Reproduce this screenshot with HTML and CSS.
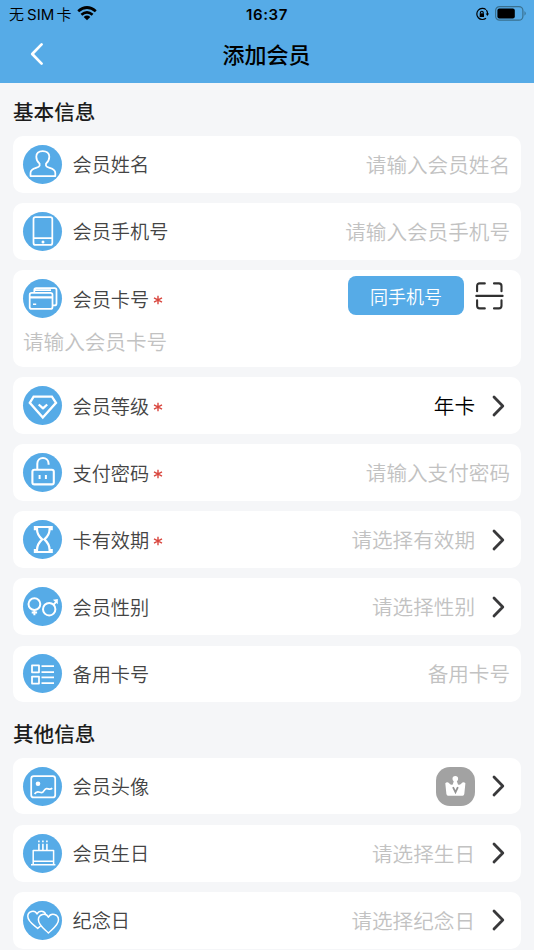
FILE: index.html
```html
<!DOCTYPE html>
<html lang="zh-CN">
<head>
<meta charset="utf-8">
<title>添加会员</title>
<link rel="stylesheet" href="styles.css">
</head>
<body>
<header class="header">
  <div class="status">
    <div class="carrier"><span>无<span class="sim">SIM</span>卡</span>
      <svg class="wifi" viewBox="0 0 20 15" fill="none" stroke="#000" stroke-width="2.7"><path d="M1.2 5.2Q10-2.2 18.8 5.2M4.4 8.7Q10 4.2 15.6 8.7"/><path d="M10 14.2L6.7 11Q10 8.2 13.3 11Z" fill="#000" stroke="none"/></svg>
    </div>
    <div class="clock">16:37</div>
    <div class="power">
      <svg class="rotation" viewBox="0 0 14 14" fill="none" stroke="#000" stroke-width="1.2"><path d="M11 2.6A5.6 5.6 0 1 0 11 11.2M11.4 3.2Q12.5 4.7 12.6 7"/><path d="M10.7 6.4H14L12.4 9Z" fill="#000" stroke="none"/><path d="M4.7 6.3H9V10H4.7Z" fill="#000" stroke="none"/><path d="M5.5 6.5V5.6A1.35 1.35 0 0 1 8.2 5.6V6.5"/></svg>
      <svg class="battery" viewBox="0 0 32 15"><rect x=".6" y=".6" width="27.3" height="13.6" rx="4" fill="none" stroke="#39708f" stroke-width="1.2"/><rect x="2.4" y="2.4" width="17.4" height="10" rx="2" fill="#000"/><path d="M29.5 5Q32 7.4 29.5 9.8Z" fill="#39708f"/></svg>
    </div>
  </div>
  <div class="nav">
    <svg class="back" viewBox="0 0 14 24"><path d="M11.6 2.4L2.2 12L11.6 21.6"/></svg>
    <h1>添加会员</h1>
  </div>
</header>
<main>
  <h2>基本信息</h2>
  <section class="list">
    <div class="card">
      <svg class="icon" viewBox="0 0 39 39"><path d="M16.6 20.8V18.7C14.6 17 13.3 14.5 13.3 11.7C13.3 8 16 6 19.7 6S26.3 8 26.3 11.7C26.3 14.5 25 17 23 18.7V20.8C24 23.5 32.3 22.4 32.3 28V31H7.5V28C7.5 22.4 15.6 23.5 16.6 20.8Z"/></svg>
      <span class="label">会员姓名</span><span class="value">请输入会员姓名</span>
    </div>
    <div class="card">
      <svg class="icon" viewBox="0 0 39 39"><rect x="10.5" y="5" width="18.8" height="27.9" rx="2"/><path d="M10.5 26.2H29.3"/><circle class="solid" cx="20" cy="30" r="1.5"/></svg>
      <span class="label">会员手机号</span><span class="value">请输入会员手机号</span>
    </div>
    <div class="card tall">
      <div class="line">
        <svg class="icon" viewBox="0 0 39 39"><path d="M11.3 13V11Q11.3 9.1 13.2 9.1H31.5Q33.5 9.1 33.5 11.1V24.4Q33.5 26.4 31.5 26.4H29.7M11.3 11.2H28"/><rect x="6.7" y="13.9" width="22.8" height="16" rx="2"/><path d="M6.7 18.3H29.5" stroke-width="2.2"/><path d="M10 25.2H13.2" stroke-width="1.5"/></svg>
        <span class="label">会员卡号</span><svg class="star" viewBox="0 0 10 10"><path d="M5 .8V9.2M1 2.8L9 7.2M9 2.8L1 7.2"/></svg>
        <button class="same">同手机号</button>
        <svg class="scan" viewBox="0 0 30 28"><path d="M2.1 9.2V4Q2.1 1.4 4.7 1.4H9.8M19 1.4H23.9Q26.5 1.4 26.5 4V9.2M2.1 18.2V23.8Q2.1 26.4 4.7 26.4H9.8M19 26.4H23.9Q26.5 26.4 26.5 23.8V18.2M1.3 13.9H27.6"/></svg>
      </div>
      <div class="entry">请输入会员卡号</div>
    </div>
    <div class="card">
      <svg class="icon" viewBox="0 0 39 39"><path stroke-width="2.3" stroke-linejoin="miter" d="M10.6 10.7H28.9L33 16.8L19.8 31.5L6.8 16.8Z"/><path stroke-width="2.3" d="M15.7 18.5L20 22.4L24.2 18.5"/></svg>
      <span class="label">会员等级</span><svg class="star" viewBox="0 0 10 10"><path d="M5 .8V9.2M1 2.8L9 7.2M9 2.8L1 7.2"/></svg><span class="value chosen">年卡</span>
      <svg class="arrow" viewBox="0 0 13 22"><path d="M2 2L10.8 11L2 20"/></svg>
    </div>
    <div class="card">
      <svg class="icon" viewBox="0 0 39 39"><rect stroke-width="2.1" x="9.4" y="16.7" width="21.4" height="14.7" rx="2"/><path stroke-width="2" d="M14.3 16V10.8C14.3 3 25.6 3 25.6 10.8V11.7M16.6 22V26M22.9 22V26"/></svg>
      <span class="label">支付密码</span><svg class="star" viewBox="0 0 10 10"><path d="M5 .8V9.2M1 2.8L9 7.2M9 2.8L1 7.2"/></svg><span class="value">请输入支付密码</span>
    </div>
    <div class="card">
      <svg class="icon" viewBox="0 0 39 39"><path stroke-width="2.2" stroke-linejoin="miter" d="M11.9 7H28.7V9.2H26.6C26.6 13.3 25 16.2 21.4 19.4C25 22.6 26.6 26 26.6 30H28.7V32H11.9V30H14C14 26 15.6 22.6 19.2 19.4C15.6 16.2 14 13.3 14 9.2H11.9Z"/></svg>
      <span class="label">卡有效期</span><svg class="star" viewBox="0 0 10 10"><path d="M5 .8V9.2M1 2.8L9 7.2M9 2.8L1 7.2"/></svg><span class="value">请选择有效期</span>
      <svg class="arrow" viewBox="0 0 13 22"><path d="M2 2L10.8 11L2 20"/></svg>
    </div>
    <div class="card">
      <svg class="icon" viewBox="0 0 39 39"><circle stroke-width="2" cx="11.4" cy="17.1" r="5.9"/><path stroke-width="2" d="M11.4 23V28.2M8.7 25.6H14.1M30.6 17.7L33.4 14.6"/><circle stroke-width="2" cx="26.2" cy="22.2" r="6.2"/><path class="solid" d="M34.8 12V17.2L30 12.7Z"/></svg>
      <span class="label">会员性别</span><span class="value">请选择性别</span>
      <svg class="arrow" viewBox="0 0 13 22"><path d="M2 2L10.8 11L2 20"/></svg>
    </div>
    <div class="card">
      <svg class="icon" viewBox="0 0 39 39"><path d="M9 11.3H16V18.3H9ZM9 22.5H16V29.5H9ZM18.5 12H31M18.5 18H31M18.5 23.3H31M18.5 29.2H31"/></svg>
      <span class="label">备用卡号</span><span class="value">备用卡号</span>
    </div>
  </section>
  <h2 class="other">其他信息</h2>
  <section class="list">
    <div class="card">
      <svg class="icon" viewBox="0 0 39 39"><rect x="8.2" y="9.2" width="24" height="21.2" rx="2.5"/><circle class="solid" cx="15" cy="16.7" r="2.3"/><path d="M11.6 27C14 23 16.5 25.7 18.5 25.7C21 25.7 21 21.5 23.4 21.5C25.5 21.5 27 23.3 29.2 21.2"/></svg>
      <span class="label">会员头像</span>
      <svg class="avatar" viewBox="0 0 39 39"><rect width="39" height="39" rx="14" fill="#a2a2a2"/><circle cx="19.3" cy="11.8" r="2.8" fill="#fff"/><path fill="#fff" d="M18.2 13H20.4L22 17.4Q23.5 18.6 25.4 16.4Q27.4 14.4 29.4 16.2L28.3 27Q28 28.7 26.6 28.7H12Q10.7 28.7 10.4 27L9.3 16.2Q11.2 14.4 13.4 16.4Q15.2 18.6 16.7 17.4Z"/><path d="M17 20.2L19.5 25.2L21.9 20.2" fill="none" stroke="#929292" stroke-width="1.8"/></svg>
      <svg class="arrow" viewBox="0 0 13 22"><path d="M2 2L10.8 11L2 20"/></svg>
    </div>
    <div class="card">
      <svg class="icon" viewBox="0 0 39 39"><path d="M10.2 30V16.4H30.6V30M10.2 27.2H30.6M8 30.8H32.4" stroke-width="1.5"/><path stroke-width="1.6" stroke-linecap="butt" d="M15.9 9.8V16M19.9 9.8V16M23.9 9.8V16M15.9 6.5V8.3M19.9 6.5V8.3M23.9 6.5V8.3"/></svg>
      <span class="label">会员生日</span><span class="value">请选择生日</span>
      <svg class="arrow" viewBox="0 0 13 22"><path d="M2 2L10.8 11L2 20"/></svg>
    </div>
    <div class="card">
      <svg class="icon" viewBox="0 0 39 39"><path stroke-width="1.5" d="M17.6 25L14.7 27.4C11.6 24.4 4.8 21 4.8 15.3C4.8 10.2 11.7 8.4 14 13C16.1 9.2 21.3 9.6 22.7 13.4"/><path stroke-width="1.5" d="M25.4 32C22 28.4 15.4 24.5 15.4 18.8C15.4 13.2 23 11.1 25.4 16.2C28 11.1 35.5 13.2 35.5 18.8C35.5 24.5 28.8 28.4 25.4 32Z"/></svg>
      <span class="label">纪念日</span><span class="value">请选择纪念日</span>
      <svg class="arrow" viewBox="0 0 13 22"><path d="M2 2L10.8 11L2 20"/></svg>
    </div>
  </section>
</main>
</body>
</html>
```
FILE: styles.css
```css
* { box-sizing: border-box; }
body {
  margin: 0;
  height: 950px;
  overflow: hidden;
  background: #f5f6f8;
  font-family: "Noto Sans CJK SC", sans-serif;
}
svg { display: block; flex: none; }
.header { height: 83px; background: #56abe7; color: #000; }
.status {
  height: 27px;
  padding: 0 9px;
  display: grid;
  grid-template-columns: 1fr auto 1fr;
  align-items: center;
  font-size: 15px;
  font-weight: 350;
  line-height: 27px;
}
.carrier { display: flex; align-items: center; gap: 7px; margin-right: -20px; }
.carrier > span { white-space: nowrap; }
.sim { font-family: Inter, sans-serif; font-weight: 400; letter-spacing: .1px; margin: 0 2px 0 3px; }
.wifi { width: 20px; height: 15px; margin: -2px 0 0 -2px; }
.clock { font: 600 15px/27px Inter, sans-serif; letter-spacing: .6px; }
.power { display: flex; justify-content: flex-end; align-items: center; gap: 6px; }
.rotation { width: 14px; height: 14px; }
.battery { width: 32px; height: 15px; margin-top: -1px; margin-right: -2px; }
.nav {
  height: 54px;
  padding: 0 31px 0 30px;
  display: grid;
  grid-template-columns: 1fr auto 1fr;
  align-items: center;
}
.back { width: 14px; height: 24px; }
.back path { fill: none; stroke: #fff; stroke-width: 2.7; stroke-linecap: round; stroke-linejoin: round; }
h1 { margin: -2px 0 0; font-size: 22px; font-weight: 500; line-height: 52px; }
main { padding: 0 13px; }
h2 {
  margin: 0;
  height: 53px;
  padding-top: 12px;
  font-size: 20.6px;
  font-weight: 500;
  line-height: 32px;
  color: #1c1c1c;
}
h2.other { height: 55.3px; padding-top: 15px; }
.list { display: flex; flex-direction: column; gap: 10.3px; }
.card {
  height: 56.8px;
  padding: 0 10px;
  display: flex;
  align-items: center;
  background: #fff;
  border-radius: 10px;
}
.card.tall { height: 96.7px; display: block; }
.line { height: 56.8px; display: flex; align-items: center; }
.icon {
  width: 39px;
  height: 39px;
  border-radius: 50%;
  background: #56abe7;
  fill: none;
  stroke: #fff;
  stroke-width: 1.75;
  stroke-linejoin: round;
}
.icon .solid { fill: #fff; stroke: none; }
.label { margin-left: 10.5px; font-size: 19.2px; font-weight: 350; color: #444; white-space: nowrap; }
.star { width: 10px; height: 10px; margin: 2px 0 0 3.5px; }
.star path { fill: none; stroke: #d9473f; stroke-width: 1.4; }
.value {
  margin: -1px 1px 0 auto;
  font-size: 20.6px;
  font-weight: 350;
  color: #c2c2c2;
  white-space: nowrap;
}
.value.chosen { color: #000; }
.arrow { width: 13px; height: 22px; margin: 0 6px 0 16px; }
.avatar + .arrow { margin-left: 17px; }
.arrow path { fill: none; stroke: #39393b; stroke-width: 2.8; stroke-linecap: round; stroke-linejoin: round; }
.avatar { width: 39px; height: 39px; margin-left: auto; }
.same {
  width: 116px;
  height: 39px;
  margin: -6px 0 0 auto;
  padding: 0;
  border: 0;
  border-radius: 8px;
  background: #56abe7;
  color: #fff;
  font: 350 18px/38px "Noto Sans CJK SC", sans-serif;
}
.scan { width: 30px; height: 28px; margin: -5px 6px 0 11px; }
.scan path { fill: none; stroke: #303030; stroke-width: 2.1; stroke-linecap: round; }
.entry { margin-top: -1px; font-size: 20.6px; font-weight: 350; line-height: 30px; color: #c2c2c2; }
```
